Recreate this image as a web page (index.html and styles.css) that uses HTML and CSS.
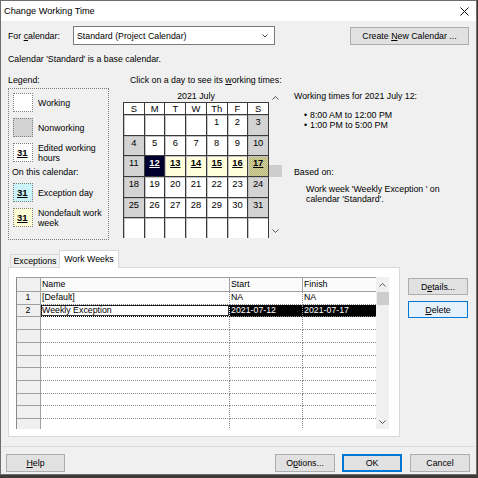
FILE: index.html
```html
<!DOCTYPE html>
<html>
<head>
<meta charset="utf-8">
<link rel="stylesheet" href="styles.css">
</head>
<body>
<div class="window">
  <div class="titlebar">
    <span class="title">Change Working Time</span>
    <svg class="close" viewBox="0 0 9 9"><path d="M0.5 0.5 L8.5 8.5 M8.5 0.5 L0.5 8.5" stroke="#111" stroke-width="1" fill="none"/></svg>
  </div>
  <div class="row1">
    <span class="lbl">For <u>c</u>alendar:</span>
    <div class="combo"><span>Standard (Project Calendar)</span><svg class="chev" viewBox="0 0 6 4"><path d="M0.5 0.5 L3 3 L5.5 0.5" stroke="#333" fill="none" stroke-width="0.9"/></svg></div>
    <div class="btn create"><span>Create <u>N</u>ew Calendar ...</span></div>
  </div>
  <div class="basetext">Calendar 'Standard' is a base calendar.</div>
  <div class="main">
    <div class="legendcol">
      <div class="cap">Legend:</div>
      <div class="legend">
        <div class="item"><div class="sw"></div><span>Working</span></div>
        <div class="item"><div class="sw nw"></div><span>Nonworking</span></div>
        <div class="item"><div class="sw"><b>31</b></div><span class="two">Edited working<br>hours</span></div>
        <div class="oncal">On this calendar:</div>
        <div class="item ex"><div class="sw exc"><b>31</b></div><span>Exception day</span></div>
        <div class="item ndi"><div class="sw ndf"><b>31</b></div><span class="two">Nondefault work<br>week</span></div>
      </div>
    </div>
    <div class="calcol">
      <div class="cap capc">Click on a day to see its <u>w</u>orking times:</div>
      <div class="calwrap">
        <div class="cal">
          <div class="month">2021 July</div>
          <div class="clip">
            <div class="grid">
              <div class="h">S</div><div class="h">M</div><div class="h">T</div><div class="h">W</div><div class="h">Th</div><div class="h">F</div><div class="h">S</div>
              <div class="c"></div><div class="c"></div><div class="c"></div><div class="c"></div><div class="c">1</div><div class="c">2</div><div class="c we">3</div>
              <div class="c we">4</div><div class="c">5</div><div class="c">6</div><div class="c">7</div><div class="c">8</div><div class="c">9</div><div class="c we">10</div>
              <div class="c we">11</div><div class="c sel"><b>12</b></div><div class="c nd"><b>13</b></div><div class="c nd"><b>14</b></div><div class="c nd"><b>15</b></div><div class="c nd"><b>16</b></div><div class="c ndw"><b>17</b></div>
              <div class="c we">18</div><div class="c">19</div><div class="c">20</div><div class="c">21</div><div class="c">22</div><div class="c">23</div><div class="c we">24</div>
              <div class="c we">25</div><div class="c">26</div><div class="c">27</div><div class="c">28</div><div class="c">29</div><div class="c">30</div><div class="c we">31</div>
              <div class="c"></div><div class="c"></div><div class="c"></div><div class="c"></div><div class="c"></div><div class="c"></div><div class="c"></div>
            </div>
          </div>
        </div>
        <div class="vscroll">
          <div class="arr up"><svg viewBox="0 0 7 4"><path d="M0.5 3.5 L3.5 0.5 L6.5 3.5" stroke="#555" fill="none" stroke-width="1"/></svg></div>
          <div class="thumb cthumb"></div>
          <div class="arr dn"><svg viewBox="0 0 7 4"><path d="M0.5 0.5 L3.5 3.5 L6.5 0.5" stroke="#555" fill="none" stroke-width="1"/></svg></div>
        </div>
      </div>
    </div>
    <div class="infocol">
      <div class="lh12">Working times for 2021 July 12:</div>
      <div class="bullets">
        <div class="bl"><span class="dot">•</span><span>8:00 AM to 12:00 PM</span></div>
        <div class="bl"><span class="dot">•</span><span>1:00 PM to 5:00 PM</span></div>
      </div>
      <div class="lh12 based">Based on:</div>
      <div class="basedtxt">Work week 'Weekly Exception ' on<br>calendar 'Standard'.</div>
    </div>
  </div>
  <div class="tabstrip">
    <div class="tab">Exceptions</div>
    <div class="tab active">Work Weeks</div>
  </div>
  <div class="panelrow">
    <div class="panel">
      <div class="table">
        <div class="tdata">
          <div class="tr thead"><div class="rh"></div><div class="td hd">Name</div><div class="td hd">Start</div><div class="td hd last">Finish</div></div>
          <div class="tr"><div class="rh">1</div><div class="td">[Default]</div><div class="td">NA</div><div class="td last">NA</div></div>
          <div class="tr"><div class="rh">2</div><div class="td focus">Weekly Exception</div><div class="td blk">2021-07-12</div><div class="td blk last">2021-07-17</div></div>
          <div class="tr"><div class="rh"></div><div class="td"></div><div class="td"></div><div class="td last"></div></div>
          <div class="tr"><div class="rh"></div><div class="td"></div><div class="td"></div><div class="td last"></div></div>
          <div class="tr"><div class="rh"></div><div class="td"></div><div class="td"></div><div class="td last"></div></div>
          <div class="tr"><div class="rh"></div><div class="td"></div><div class="td"></div><div class="td last"></div></div>
          <div class="tr"><div class="rh"></div><div class="td"></div><div class="td"></div><div class="td last"></div></div>
          <div class="tr"><div class="rh"></div><div class="td"></div><div class="td"></div><div class="td last"></div></div>
          <div class="tr"><div class="rh"></div><div class="td"></div><div class="td"></div><div class="td last"></div></div>
          <div class="tr"><div class="rh"></div><div class="td"></div><div class="td"></div><div class="td last"></div></div>
          <div class="tr"><div class="rh"></div><div class="td"></div><div class="td"></div><div class="td last"></div></div>
        </div>
        <div class="tscroll">
          <div class="arr tup"><svg viewBox="0 0 7 4"><path d="M0.5 3.5 L3.5 0.5 L6.5 3.5" stroke="#555" fill="none" stroke-width="1"/></svg></div>
          <div class="thumb tthumb"></div>
          <div class="arr tdn"><svg viewBox="0 0 7 4"><path d="M0.5 0.5 L3.5 3.5 L6.5 0.5" stroke="#555" fill="none" stroke-width="1"/></svg></div>
        </div>
      </div>
    </div>
    <div class="sidebtns">
      <div class="btn side"><span>D<u>e</u>tails...</span></div>
      <div class="btn side focused"><span><u>D</u>elete</span></div>
    </div>
  </div>
  <div class="sep"></div>
  <div class="footer">
    <div class="btn fb"><span><u>H</u>elp</span></div>
    <div class="btn fb opt"><span>O<u>p</u>tions...</span></div>
    <div class="btn fb ok"><span>OK</span></div>
    <div class="btn fb cancel"><span>Cancel</span></div>
  </div>
</div>
</body>
</html>
```
FILE: styles.css
```css
* { box-sizing: border-box; }
html, body { margin: 0; padding: 0; }
body {
  width: 478px; height: 478px; overflow: hidden;
  background: #3f3a36;
  font-family: "Liberation Sans", Arial, sans-serif;
  font-size: 8.8px; color: #000;
}
u { text-decoration: underline; text-underline-offset: 1px; }
.window {
  width: 477px; height: 475px;
  border: 1px solid #6d6d6d;
  background: #f0f0f0;
  display: flex; flex-direction: column;
}
.titlebar {
  height: 20px; flex: none; background: #fff;
  display: flex; align-items: center; justify-content: space-between;
  padding: 0 7px 0 3px;
}
.title { font-size: 9.2px; }
.close { width: 9px; height: 9px; display: block; }

.row1 {
  margin-top: 5px; height: 19px; flex: none;
  display: flex; align-items: center;
  padding: 0 7px;
}
.lbl { width: 65px; }
.combo {
  width: 202px; height: 19px; background: #fff;
  border: 1px solid #7a7a7a;
  display: flex; align-items: center; justify-content: space-between;
  padding: 0 6px 0 3px;
}
.chev { width: 6px; height: 4px; display: block; }
.btn {
  background: #e1e1e1; border: 1px solid #adadad;
  display: flex; align-items: center; justify-content: center;
  white-space: nowrap;
}
.create { margin-left: auto; width: 119px; height: 18px; }

.basetext { margin-top: 8px; padding-left: 7px; line-height: 12px; height: 12px; flex: none; }

.main { margin-top: 9px; height: 167px; flex: none; display: flex; padding-left: 7px; }
.cap { line-height: 12px; height: 12px; }
.legendcol { width: 101px; }
.legend {
  margin-top: 2px; height: 152px;
  border: 1px dotted #7d7d7d;
  padding: 4px 0 0 4px;
  display: flex; flex-direction: column;
}
.item { display: flex; align-items: center; height: 19px; gap: 5px; margin-bottom: 6px; }
.sw {
  width: 20px; height: 19px; flex: none; background: #fff;
  border: 1px dotted #7d7d7d;
  display: flex; align-items: center; padding-left: 3px;
}
.sw b { font-size: 9.5px; text-decoration: underline; text-underline-offset: 1px; }
.sw.nw { background: #d3d3d3; }
.sw.exc { background: #cbf3fa; }
.sw.ndf { background: #fdfdd6; }
.two { line-height: 10px; }
.oncal { line-height: 12px; margin: -2px 0 0 -1px; }
.item.ex { margin-top: 5px; }

.calcol { margin-left: 14px; width: 159px; }
.capc { padding-left: 7px; white-space: nowrap; }
.calwrap { margin-top: 4px; display: flex; }
.cal { width: 146px; }
.month { text-align: center; line-height: 12px; height: 12px; }
.clip { height: 136px; overflow: hidden; }
.grid {
  display: grid;
  grid-template-columns: repeat(7, 1fr);
  grid-template-rows: 11px repeat(6, 19.7px);
  gap: 1px;
  background: #3a3a3a;
  border: 1px solid #3a3a3a;
  font-size: 9.4px;
}
.h { background: #fff; text-align: center; line-height: 11px; }
.c { background: #fff; text-align: center; line-height: 14px; box-shadow: inset 1px 1px 0 #c4c4c4; }
.c.we { background: #d3d3d3; box-shadow: inset 1px 1px 0 #bcbcbc; }
.c b { text-decoration: underline; text-underline-offset: 1px; }
.c.sel { background: #00002e; color: #fff; box-shadow: none; }
.c.nd { background: #ffffdc; }
.c.ndw {
  background-color: #c8c690;
  background-image: repeating-conic-gradient(#d6d49e 0 25%, #b7b57a 0 50%);
  background-size: 2px 2px;
}
.vscroll { width: 13px; height: 148px; display: flex; flex-direction: column; align-items: center; }
.arr { display: flex; align-items: center; justify-content: center; width: 100%; }
.arr svg { width: 7px; height: 4px; display: block; }
.arr.up { height: 16px; }
.thumb { background: #cdcdcd; }
.cthumb { margin-top: 59px; height: 12px; width: 13px; }
.arr.dn { margin-top: auto; height: 14px; }

.infocol { margin-left: 12px; padding-top: 16px; }
.lh12 { line-height: 12px; }
.bullets { margin-top: 8px; padding-left: 10px; }
.bl { line-height: 10px; display: flex; }
.dot { width: 6px; }
.based { margin-top: 36px; }
.basedtxt { margin-top: 6px; padding-left: 12px; line-height: 10px; }

.tabstrip {
  margin-top: 9px; height: 17px; flex: none;
  display: flex; align-items: flex-end; padding-left: 9px;
}
.tab {
  height: 13px; padding: 0 3px; width: 50px;
  border: 1px solid #d9d9d9; border-bottom: none;
  display: flex; align-items: center; justify-content: center;
  background: #f0f0f0;
}
.tab.active {
  width: 60px; height: 18px; background: #fff; margin-left: -1px; margin-bottom: -1px;
  position: relative; z-index: 1; padding-bottom: 2px;
}

.panelrow { height: 170px; flex: none; display: flex; padding-left: 7px; }
.panel {
  width: 392px; height: 170px; background: #fff;
  border: 1px solid #d9d9d9;
  padding: 9px 0 0 7px;
}
.table { width: 373px; height: 152px; display: flex; }
.tdata {
  width: 360px; height: 152px; overflow: hidden;
  border-top: 1px solid #a0a0a0; border-left: 1px solid #8a8a8a;
}
.tr { display: grid; grid-template-columns: 24px 189px 73px 73px; height: 12.73px; }
.tr.thead { height: 14px; }
.rh {
  background: #f0f0f0;
  border-right: 1px solid #a0a0a0; border-bottom: 1px solid #a0a0a0;
  text-align: center; line-height: 11.7px; padding-right: 1px;
}
.td {
  border-right: 1px dotted #8a8a8a; border-bottom: 1px dotted #8a8a8a;
  padding-left: 1px; line-height: 11.7px; white-space: nowrap; overflow: hidden;
}
.td.last { border-right: none; }
.td.hd { background: #fbfbfb; border-right: 1px solid #a0a0a0; border-bottom: 1px solid #a0a0a0; line-height: 13px; }
.td.hd.last { border-right: none; }
.td.focus { outline: 1px dotted #000; outline-offset: -1px; box-shadow: inset 0 0 0 1px #333; }
.td.blk { background: #000; color: #fff; }
.tscroll { width: 13px; height: 152px; background: #f0f0f0; display: flex; flex-direction: column; align-items: flex-end; }
.arr.tup { height: 15px; }
.tthumb { height: 13px; width: 12px; }
.arr.tdn { margin-top: auto; height: 15px; }

.sidebtns { margin-left: 8px; padding-top: 11px; width: 60px; display: flex; flex-direction: column; }
.btn.side { height: 17px; }
.btn.side + .btn.side { margin-top: 6px; }
.btn.focused { border-color: #0078d7; background: #e5f1fb; }

.sep { margin: 9px 1px 0; height: 1px; background: #dcdcdc; flex: none; }
.footer { margin-top: 7px; height: 18px; flex: none; display: flex; padding: 0 6px 0 5px; }
.fb { width: 59px; height: 18px; }
.opt { margin-left: auto; width: 60px; }
.ok { margin-left: 7px; width: 60px; border-color: #0078d7; box-shadow: inset 0 0 0 1px #0078d7; }
.cancel { margin-left: 8px; width: 60px; }
```
